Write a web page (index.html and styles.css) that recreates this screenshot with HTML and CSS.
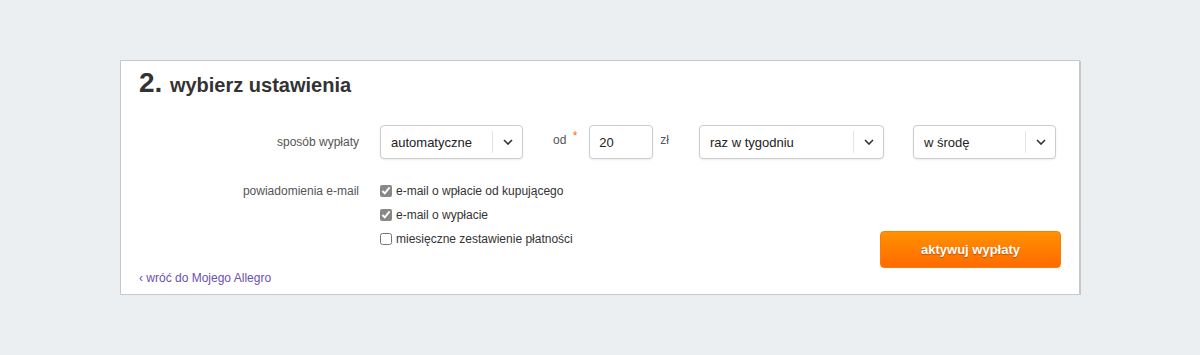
FILE: index.html
```html
<!DOCTYPE html>
<html lang="pl">
<head>
  <meta charset="utf-8">
  <title>Wypłaty - ustawienia</title>
  <link rel="stylesheet" href="styles.css">
</head>
<body>
  <div class="panel">
    <h2 class="step-title"><span class="step-num">2.</span> wybierz ustawienia</h2>

    <div class="form-row">
      <div class="form-label">sposób wypłaty</div>
      <div class="controls">
        <div class="select select-short">
          <span class="select-value">automatyczne</span>
          <span class="select-arrow">
            <svg width="10" height="6" viewBox="0 0 10 6"><path d="M1 1l4 4 4-4" fill="none" stroke="#333" stroke-width="1.6"/></svg>
          </span>
        </div>
        <span class="inline-label od">od <span class="req">*</span></span>
        <input class="amount" type="text" value="20">
        <span class="inline-label zl">zł</span>
        <div class="select select-long">
          <span class="select-value">raz w tygodniu</span>
          <span class="select-arrow">
            <svg width="10" height="6" viewBox="0 0 10 6"><path d="M1 1l4 4 4-4" fill="none" stroke="#333" stroke-width="1.6"/></svg>
          </span>
        </div>
        <div class="select select-short day">
          <span class="select-value">w środę</span>
          <span class="select-arrow">
            <svg width="10" height="6" viewBox="0 0 10 6"><path d="M1 1l4 4 4-4" fill="none" stroke="#333" stroke-width="1.6"/></svg>
          </span>
        </div>
      </div>
    </div>

    <div class="form-row notify-row">
      <div class="form-label">powiadomienia e-mail</div>
      <div class="checks">
        <label class="check"><input type="checkbox" checked> e-mail o wpłacie od kupującego</label>
        <label class="check"><input type="checkbox" checked> e-mail o wypłacie</label>
        <label class="check"><input type="checkbox"> miesięczne zestawienie płatności</label>
      </div>
      <button class="btn-activate" type="button">aktywuj wypłaty</button>
    </div>

    <a class="back-link" href="#">‹ wróć do Mojego Allegro</a>
  </div>
</body>
</html>
```

FILE: styles.css
```css
* {
  margin: 0;
  padding: 0;
  box-sizing: border-box;
}

body {
  font-family: 'Liberation Sans', Arial, sans-serif;
  background: #eceff1;
  color: #333;
  padding-top: 60px;
}

.panel {
  width: 960px;
  height: 235px;
  margin: 0 auto;
  background: #fff;
  border: 1px solid #c8c8c8;
  box-shadow: 1px 1px 0 #c8c8c8;
  padding: 5px 18px 0 18px;
}

.step-title {
  font-size: 20px;
  font-weight: bold;
  color: #333;
  line-height: 34px;
}

.step-num {
  font-size: 28px;
  margin-right: 2px;
}

.form-row {
  display: flex;
}

.form-label {
  width: 220px;
  text-align: right;
  font-size: 12px;
  color: #555;
  margin-right: 21px;
}

.controls {
  display: flex;
  align-items: center;
  margin-top: 23px;
}

.form-row:nth-of-type(1) .form-label {
  margin-top: 23px;
  line-height: 34px;
}

.select {
  display: flex;
  align-items: center;
  height: 34px;
  border: 1px solid #ccc;
  border-radius: 4px;
  box-shadow: 0 1px 2px rgba(0, 0, 0, 0.08);
  background: #fff;
  font-size: 13px;
  color: #222;
}

.select-value {
  flex: 1;
  padding-left: 10px;
}

.select-arrow {
  width: 30px;
  height: 22px;
  border-left: 1px solid #e4e4e4;
  display: flex;
  align-items: center;
  justify-content: center;
}

.select-short {
  width: 143px;
}

.select-long {
  width: 185px;
}

.day {
  margin-left: 29px;
}

.inline-label {
  font-size: 12px;
  color: #555;
  align-self: flex-start;
  margin-top: 8px;
}

.od {
  margin-left: 30px;
  margin-right: 12px;
}

.req {
  color: #ff6a00;
  position: relative;
  top: -4px;
  margin-left: 3px;
}

.amount {
  width: 64px;
  height: 34px;
  border: 1px solid #ccc;
  border-radius: 4px;
  box-shadow: 0 1px 2px rgba(0, 0, 0, 0.08);
  font-family: inherit;
  font-size: 13px;
  color: #222;
  padding-left: 9px;
}

.zl {
  margin-left: 7px;
  margin-right: 30px;
}

.notify-row {
  margin-top: 23px;
}

.notify-row .form-label {
  line-height: 18px;
}

.checks {
  display: flex;
  flex-direction: column;
  gap: 6px;
}

.check {
  display: flex;
  align-items: center;
  font-size: 12px;
  color: #333;
  line-height: 18px;
}

.check input {
  width: 12px;
  height: 12px;
  margin: 0 4px 0 0;
  accent-color: #888;
}

.btn-activate {
  margin-left: auto;
  margin-top: 49px;
  width: 181px;
  height: 37px;
  border: 1px solid #ff7a00;
  border-radius: 4px;
  background: linear-gradient(#ff9200, #ff6a00);
  color: #fff;
  font-family: inherit;
  font-size: 13px;
  font-weight: bold;
  text-shadow: 0 1px 1px rgba(120, 40, 0, 0.5);
  cursor: pointer;
}

.back-link {
  display: inline-block;
  margin-top: 2px;
  font-size: 12px;
  color: #6a4fb3;
  text-decoration: none;
}
```
